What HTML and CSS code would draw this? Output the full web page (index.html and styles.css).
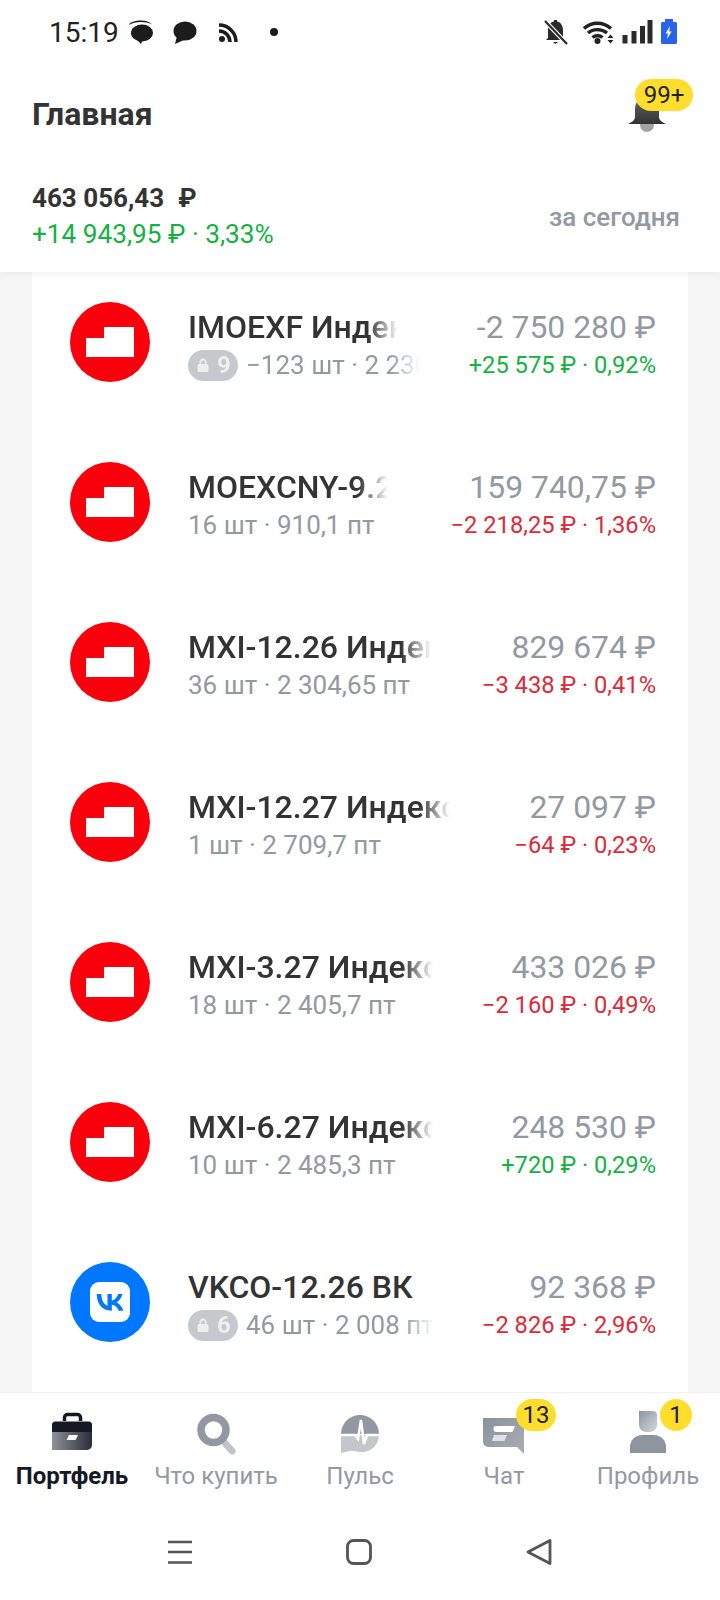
FILE: index.html
```html
<!DOCTYPE html>
<html lang="ru">
<head>
<meta charset="UTF-8">
<meta name="viewport" content="width=device-width, initial-scale=1.0">
<title>Главная</title>
<link rel="stylesheet" href="styles.css">
</head>
<body>
<svg class="defs" width="0" height="0">
  <defs>
    <linearGradient id="g-case" x1="0" y1="0" x2="1" y2="0"><stop offset="0" stop-color="#8d9198"/><stop offset="1" stop-color="#2a2e38"/></linearGradient>
    <linearGradient id="g-bell" x1="0" y1="0" x2="0" y2="1"><stop offset="0" stop-color="#666"/><stop offset="1" stop-color="#333"/></linearGradient>
    <linearGradient id="g-chat" x1="0" y1="0" x2="1" y2="1"><stop offset="0" stop-color="#8b919b"/><stop offset="1" stop-color="#a9aeb6"/></linearGradient>
    <linearGradient id="g-head" x1="0" y1="0" x2="1" y2="1"><stop offset="0" stop-color="#8f959f"/><stop offset="1" stop-color="#d4d6da"/></linearGradient>
    <symbol id="moex" viewBox="0 0 80 80">
      <circle cx="40" cy="40" r="40" fill="#f8000c"/>
      <path d="M16 36h18V25h30v30H16z" fill="#fff"/>
    </symbol>
    <symbol id="lock" viewBox="0 0 16 16">
      <path d="M4.5 7V5a3.5 3.5 0 0 1 7 0v2h-1.8V5a1.7 1.7 0 0 0-3.400 0v2z" fill="#eceef0"/>
      <rect x="2.500" y="7" width="11" height="8" rx="1.500" fill="#eceef0"/>
    </symbol>
  </defs>
</svg>

<header class="top">
  <div class="status">
    <div class="status-left">
      <span class="time">15:19</span>
      <svg class="status-icons-left" viewBox="127 17 156 30" width="156" height="30">
        <path d="M129 25c1-3 6-4.500 12-4.500 5 0 9 1.500 11 4-3-1.800-7-2.500-11-2.500-5 0-9 1-12 3z" fill="#1c1c1c"/>
        <ellipse cx="142" cy="33" rx="11" ry="8.500" fill="#1c1c1c"/>
        <path d="M136 39l5 5 2-5z" fill="#1c1c1c"/>
        <ellipse cx="185" cy="31" rx="11.500" ry="9.500" fill="#1c1c1c"/>
        <path d="M177 36l-2 8 9-4z" fill="#1c1c1c"/>
        <circle cx="222" cy="39" r="3" fill="#1c1c1c"/>
        <path d="M219 31a11 11 0 0 1 11 11M219 25a17 17 0 0 1 17 17" fill="none" stroke="#1c1c1c" stroke-width="3.500"/>
        <circle cx="274" cy="32" r="4" fill="#1c1c1c"/>
      </svg>
    </div>
    <svg class="status-icons-right" viewBox="540 15 142 34" width="142" height="34">
      <path d="M548 38v-8c0-5 3-8 6-8.500v-1.500h3v1.500c3 .5 6 3.500 6 8.500v8l2 2h-19z" fill="#2b2b2b"/>
      <path d="M553 42h5l-2.500 2z" fill="#2b2b2b"/>
      <path d="M545 21l22 23" stroke="#fff" stroke-width="4.500"/>
      <path d="M545 21l22 23" stroke="#2b2b2b" stroke-width="2.200"/>
      <circle cx="597.500" cy="41" r="3" fill="#222"/>
      <path d="M584 28.500c7.500-7 19-7 27 0M588 33c5-4.500 13.500-4.500 19 0M592.500 37.500c2.800-2.300 7.200-2.300 10 0" fill="none" stroke="#222" stroke-width="3.400"/>
      <path d="M607.500 38l3-3.500 3 3.500zM607.500 40h6l-3 3.500z" fill="#222"/>
      <rect x="622.500" y="35" width="5" height="8.500" fill="#2b2b2b"/>
      <rect x="631.500" y="31" width="5" height="12.500" fill="#2b2b2b"/>
      <rect x="640" y="26" width="5" height="17.500" fill="#2b2b2b"/>
      <rect x="647.500" y="20" width="5" height="23.500" fill="#2b2b2b"/>
      <path d="M665 19h8v3h2.500a1.500 1.500 0 0 1 1.500 1.500V42.500a1.500 1.500 0 0 1-1.500 1.500h-13a1.500 1.500 0 0 1-1.500-1.500V23.500a1.500 1.500 0 0 1 1.500-1.500H665z" fill="#2963ea"/>
      <path d="M670 26l-4.500 7.500h2.500l-1 5.500 4.700-7.500h-2.500z" fill="#fff"/>
    </svg>
  </div>
  <div class="title-row">
    <h1 class="title">Главная</h1>
    <div class="bell">
      <svg viewBox="0 0 44 40" width="44" height="40">
        <circle cx="22" cy="28" r="7" fill="#a3a3a3"/>
        <path d="M10 12c0-7 5-12 12-12s12 5 12 12v8c0 3 3 5 7 7H3c4-2 7-4 7-7z" fill="url(#g-bell)"/>
      </svg>
      <span class="badge badge-bell">99+</span>
    </div>
  </div>
  <div class="balance">
    <div>
      <div class="total">463 056,43<span class="total-cur">₽</span></div>
      <div class="change plus">+14 943,95 ₽ · 3,33%</div>
    </div>
    <div class="period">за сегодня</div>
  </div>
</header>

<main class="content">
  <div class="card">
    <div class="row">
      <svg class="logo" width="80" height="80"><use href="#moex"/></svg>
      <div class="info">
        <div class="name fade name-210">IMOEXF Индекс</div>
        <div class="sub fade sub-232"><span class="lock-tag"><svg width="16" height="16"><use href="#lock"/></svg>9</span>−123 шт · 2 230 пт</div>
      </div>
      <div class="nums">
        <div class="value">-2 750 280 ₽</div>
        <div class="delta plus">+25 575 ₽ · 0,92%</div>
      </div>
    </div>
    <div class="row">
      <svg class="logo" width="80" height="80"><use href="#moex"/></svg>
      <div class="info">
        <div class="name fade name-200">MOEXCNY-9.26</div>
        <div class="sub">16 шт · 910,1 пт</div>
      </div>
      <div class="nums">
        <div class="value">159 740,75 ₽</div>
        <div class="delta minus">−2 218,25 ₽ · 1,36%</div>
      </div>
    </div>
    <div class="row">
      <svg class="logo" width="80" height="80"><use href="#moex"/></svg>
      <div class="info">
        <div class="name fade name-243">MXI-12.26 Индекс</div>
        <div class="sub">36 шт · 2 304,65 пт</div>
      </div>
      <div class="nums">
        <div class="value">829 674 ₽</div>
        <div class="delta minus">−3 438 ₽ · 0,41%</div>
      </div>
    </div>
    <div class="row">
      <svg class="logo" width="80" height="80"><use href="#moex"/></svg>
      <div class="info">
        <div class="name fade name-262">MXI-12.27 Индекс</div>
        <div class="sub">1 шт · 2 709,7 пт</div>
      </div>
      <div class="nums">
        <div class="value">27 097 ₽</div>
        <div class="delta minus">−64 ₽ · 0,23%</div>
      </div>
    </div>
    <div class="row">
      <svg class="logo" width="80" height="80"><use href="#moex"/></svg>
      <div class="info">
        <div class="name fade name-245">MXI-3.27 Индекс</div>
        <div class="sub">18 шт · 2 405,7 пт</div>
      </div>
      <div class="nums">
        <div class="value">433 026 ₽</div>
        <div class="delta minus">−2 160 ₽ · 0,49%</div>
      </div>
    </div>
    <div class="row">
      <svg class="logo" width="80" height="80"><use href="#moex"/></svg>
      <div class="info">
        <div class="name fade name-245">MXI-6.27 Индекс</div>
        <div class="sub">10 шт · 2 485,3 пт</div>
      </div>
      <div class="nums">
        <div class="value">248 530 ₽</div>
        <div class="delta plus">+720 ₽ · 0,29%</div>
      </div>
    </div>
    <div class="row">
      <svg class="logo" viewBox="0 0 80 80" width="80" height="80">
        <circle cx="40" cy="40" r="40" fill="#07f"/>
        <rect x="20" y="20" width="40" height="40" rx="9" fill="#fff"/>
        <path transform="translate(20 20) scale(.8333)" d="M25.54 34.5C14.6 34.5 8.36 27 8.1 14.52H13.58C13.76 23.68 17.8 27.56 21 28.36V14.52H26.16V22.42C29.32 22.08 32.64 18.48 33.76 14.52H38.92C38.06 19.4 34.46 23 31.9 24.48C34.46 25.68 38.56 28.82 40.12 34.5H34.44C33.22 30.7 30.18 27.76 26.16 27.36V34.5H25.54Z" fill="#07f"/>
      </svg>
      <div class="info">
        <div class="name">VKCO-12.26 ВК</div>
        <div class="sub fade sub-246"><span class="lock-tag"><svg width="16" height="16"><use href="#lock"/></svg>6</span>46 шт · 2 008 пт</div>
      </div>
      <div class="nums">
        <div class="value">92 368 ₽</div>
        <div class="delta minus">−2 826 ₽ · 2,96%</div>
      </div>
    </div>
  </div>
</main>

<nav class="tabs">
  <div class="tab tab-active">
    <div class="tab-icon">
      <svg viewBox="42 1396 60 60" width="60" height="60">
        <path d="M64.500 1420v-3.500a3 3 0 0 1 3-3h10a3 3 0 0 1 3 3v3.500" fill="none" stroke="#151924" stroke-width="3.500"/>
        <path d="M52 1431v-7a3.500 3.500 0 0 1 3.500-3.500h33a3.500 3.500 0 0 1 3.500 3.500v7z" fill="#151924"/>
        <path d="M52 1431h40v13a5 5 0 0 1-5 5H52z" fill="url(#g-case)"/>
        <path d="M69 1434h9l-2.500 5h-9z" fill="#fff"/>
      </svg>
    </div>
    <span class="tab-label">Портфель</span>
  </div>
  <div class="tab">
    <div class="tab-icon">
      <svg viewBox="186 1396 60 60" width="60" height="60">
        <path d="M225 1442l7 8" stroke="#c0c4c9" stroke-width="7" stroke-linecap="round"/>
        <circle cx="213.500" cy="1429" r="12.500" fill="none" stroke="#9298a2" stroke-width="7.500"/>
      </svg>
    </div>
    <span class="tab-label">Что купить</span>
  </div>
  <div class="tab">
    <div class="tab-icon">
      <svg viewBox="330 1396 60 60" width="60" height="60">
        <path d="M341 1433a19 19 0 0 1 38 0z" fill="#9298a2"/>
        <path d="M341 1434h38c0 9-7 17-17 17-5 0-8-2-12-1l-9 2z" fill="#c3c6ca"/>
        <path d="M341 1434h14l3 4 3-19 3 24 3-9h12" fill="none" stroke="#fff" stroke-width="2.500"/>
      </svg>
    </div>
    <span class="tab-label">Пульс</span>
  </div>
  <div class="tab">
    <div class="tab-icon">
      <svg viewBox="474 1396 60 60" width="60" height="60">
        <path d="M483 1417h41v36l-7-7h-29a5 5 0 0 1-5-5z" fill="url(#g-chat)"/>
        <path d="M495 1425h20l-2.500 6h-16a3 3 0 0 1-3-3 3 3 0 0 1 1.500-3z" fill="#fff"/>
        <path d="M494 1434h13l-2.500 6h-12.500z" fill="#dfe1e4"/>
      </svg>
      <span class="badge badge-tab">13</span>
    </div>
    <span class="tab-label">Чат</span>
  </div>
  <div class="tab">
    <div class="tab-icon">
      <svg viewBox="618 1396 60 60" width="60" height="60">
        <path d="M639 1410h14a4 4 0 0 1 4 4v10a7 7 0 0 1-7 7h-4a7 7 0 0 1-7-7v-14z" fill="url(#g-head)"/>
        <path d="M630 1452v-6a12 12 0 0 1 12-12h12a12 12 0 0 1 12 12v6z" fill="#8f959f"/>
      </svg>
      <span class="badge badge-tab badge-one">1</span>
    </div>
    <span class="tab-label">Профиль</span>
  </div>
</nav>

<div class="softkeys">
  <svg viewBox="160 30 24 24" class="softkey softkey-menu" width="24" height="24">
    <path d="M160 32h24M160 42h24M160 52.500h24" stroke="#555" stroke-width="2.500"/>
  </svg>
  <svg viewBox="0 0 26 26" class="softkey" width="26" height="26">
    <rect x="1.500" y="1.500" width="23" height="23" rx="6" fill="none" stroke="#555" stroke-width="2.800"/>
  </svg>
  <svg viewBox="0 0 26 28" class="softkey softkey-back" width="26" height="28">
    <path d="M24 2.500v23L2 14z" fill="none" stroke="#555" stroke-width="2.800" stroke-linejoin="round"/>
  </svg>
</div>
</body>
</html>
```

FILE: styles.css
```css
body {
  margin: 0;
  padding: 0;
  height: 1600px;
  display: flex;
  flex-direction: column;
  overflow: hidden;
  background-color: #fff;
  font-family: Roboto, "Noto Sans", sans-serif;
  color: #333;
}
.defs {
  position: absolute;
}

/* шапка */
.top {
  position: relative;
  z-index: 2;
  height: 272px;
  flex-shrink: 0;
  background-color: #fff;
  box-shadow: 0 2px 8px rgba(0, 0, 0, 0.05);
}
.status {
  height: 64px;
  display: flex;
  justify-content: space-between;
  align-items: center;
  padding-left: 49px;
  padding-right: 38px;
}
.status-left {
  display: flex;
  align-items: center;
  gap: 8px;
}
.time {
  font-size: 28px;
  color: #222;
}
.title-row {
  height: 100px;
  box-sizing: border-box;
  display: flex;
  justify-content: space-between;
  align-items: center;
  padding-left: 32px;
  padding-right: 27px;
}
.title {
  margin: 0;
  font-size: 32px;
  font-weight: 700;
  color: #333;
}
.bell {
  position: relative;
  width: 68px;
  height: 40px;
  margin-top: 6px;
}
.bell svg {
  position: absolute;
  left: 0;
  top: 0;
}
.balance {
  display: flex;
  justify-content: space-between;
  align-items: center;
  padding: 16px 40px 0 32px;
}
.total {
  font-size: 26px;
  font-weight: 700;
  line-height: 36px;
  color: #333;
}
.total-cur {
  margin-left: 14px;
}
.change {
  font-size: 26.2px;
  line-height: 36px;
}
.period {
  font-size: 26px;
  font-weight: 500;
  color: #9299a2;
  margin-top: 2px;
}
.plus {
  color: #13b23f;
}
.minus {
  color: #dd2a38;
}

/* значки */
.badge {
  position: absolute;
  height: 32px;
  line-height: 32px;
  border-radius: 16px;
  background-color: #ffdd2d;
  color: #222;
  font-size: 24px;
  text-align: center;
}
.badge-bell {
  left: 10px;
  top: -18px;
  width: 58px;
}
.badge-tab {
  left: 42px;
  top: 2px;
  width: 40px;
}
.badge-one {
  left: 42px;
  width: 32px;
}

/* список */
.content {
  flex: 1;
  min-height: 0;
  overflow: hidden;
  background-color: #f6f6f7;
}
.card {
  margin: -10px 32px 0;
  min-height: 1130px;
  background-color: #fff;
}
.row {
  height: 160px;
  display: flex;
  padding: 0 32px 0 38px;
  align-items: flex-start;
}
.logo {
  flex-shrink: 0;
  margin-top: 40px;
  margin-right: 38px;
}
.info {
  flex: 1;
  min-width: 0;
  padding-top: 46px;
}
.name {
  font-size: 32px;
  font-weight: 500;
  line-height: 38px;
  white-space: nowrap;
  color: #333;
}
.sub {
  display: flex;
  align-items: center;
  height: 38px;
  font-size: 26px;
  line-height: 38px;
  white-space: nowrap;
  color: #9299a2;
}
.fade {
  overflow: hidden;
  -webkit-mask-image: linear-gradient(to right, #000 calc(100% - 30px), transparent);
  mask-image: linear-gradient(to right, #000 calc(100% - 30px), transparent);
}
.name-200 { width: 200px; }
.name-210 { width: 210px; }
.name-243 { width: 243px; }
.name-245 { width: 245px; }
.name-262 { width: 262px; }
.sub-232 { width: 232px; }
.sub-246 { width: 246px; }
.lock-tag {
  flex-shrink: 0;
  display: flex;
  align-items: center;
  justify-content: center;
  gap: 6px;
  width: 50px;
  height: 31px;
  margin-right: 8px;
  border-radius: 16px;
  background-color: #c5c9cd;
  color: #eceef0;
  font-size: 24px;
  font-weight: 700;
}
.nums {
  flex-shrink: 0;
  padding-top: 46px;
  text-align: right;
  white-space: nowrap;
}
.value {
  font-size: 31.9px;
  line-height: 38px;
  color: #9299a2;
}
.delta {
  font-size: 23.7px;
  line-height: 38px;
}

/* нижнее меню */
.tabs {
  height: 108px;
  flex-shrink: 0;
  box-sizing: border-box;
  display: grid;
  grid-template-columns: repeat(5, 144px);
  padding-top: 4px;
  border-top: 1px solid #f0f1f2;
  background-color: #fff;
}
.tab {
  display: flex;
  flex-direction: column;
  align-items: center;
}
.tab-icon {
  position: relative;
  width: 60px;
  height: 60px;
}
.tab-icon svg {
  display: block;
}
.tab-label {
  margin-top: 4px;
  font-size: 24px;
  line-height: 30px;
  white-space: nowrap;
  color: #9299a2;
}
.tab-active .tab-label {
  font-weight: 700;
  color: #151924;
}
.softkeys {
  height: 100px;
  flex-shrink: 0;
  display: flex;
  align-items: center;
  justify-content: center;
  gap: 154px;
  padding-top: 3px;
  box-sizing: border-box;
}
```
